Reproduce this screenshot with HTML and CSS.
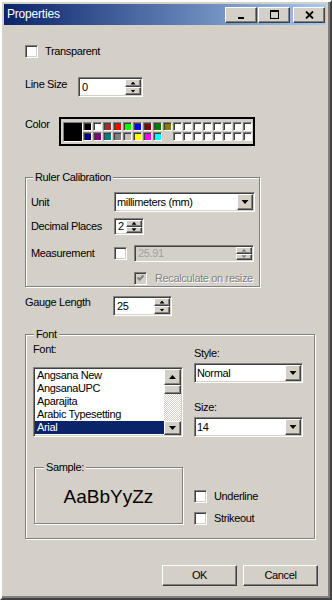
FILE: index.html
```html
<!DOCTYPE html>
<html lang="en">
<head>
    <meta charset="UTF-8">
    <meta name="viewport" content="width=device-width, initial-scale=1.0">
    <title>Properties</title>
    <link rel="stylesheet" href="styles.css">
</head>
<body>
    <div class="window">
        <!-- Title Bar -->
        <div class="titlebar">
            <span class="title">Properties</span>
            <div class="caption-buttons">
                <span class="cap-btn">
                    <svg width="9" height="9" viewBox="0 0 9 9"><rect x="1" y="7" width="6" height="2" fill="#000"/></svg>
                </span>
                <span class="cap-btn">
                    <svg width="9" height="9" viewBox="0 0 9 9"><path d="M0 0h9v9H0z M1 2v6h7V2z" fill="#000" fill-rule="evenodd"/></svg>
                </span>
                <span class="cap-btn close-btn">
                    <svg width="9" height="8" viewBox="0 0 9 8"><path d="M1 0.5l7 7M8 0.5l-7 7" stroke="#000" stroke-width="1.8"/></svg>
                </span>
            </div>
        </div>

        <div class="content">
            <!-- Transparent -->
            <div class="check-row transparent-row">
                <span class="check"></span>
                <span>Transparent</span>
            </div>

            <!-- Line Size -->
            <div class="row line-row">
                <span class="label line-label">Line Size</span>
                <div class="spin spin-line">
                    <span class="spin-value">0</span>
                    <span class="spin-btns">
                        <span class="spin-btn"><i class="tiny-up"></i></span>
                        <span class="spin-btn"><i class="tiny-down"></i></span>
                    </span>
                </div>
            </div>

            <!-- Color -->
            <div class="row color-row">
                <span class="label color-label">Color</span>
                <div class="palette">
                    <span class="swatch-big"></span>
                    <div class="swatch-grid">
                        <span class="swatch" style="background:#000000"></span>
                        <span class="swatch" style="background:#ffffff"></span>
                        <span class="swatch" style="background:#a52a2a"></span>
                        <span class="swatch" style="background:#ff0000"></span>
                        <span class="swatch" style="background:#00ff00"></span>
                        <span class="swatch" style="background:#0000ff"></span>
                        <span class="swatch" style="background:#800000"></span>
                        <span class="swatch" style="background:#008000"></span>
                        <span class="swatch" style="background:#808000"></span>
                        <span class="swatch"></span><span class="swatch"></span><span class="swatch"></span><span class="swatch"></span>
                        <span class="swatch"></span><span class="swatch"></span><span class="swatch"></span><span class="swatch"></span>

                        <span class="swatch" style="background:#000080"></span>
                        <span class="swatch" style="background:#800080"></span>
                        <span class="swatch" style="background:#008080"></span>
                        <span class="swatch" style="background:#808080"></span>
                        <span class="swatch" style="background:#c0c0c0"></span>
                        <span class="swatch" style="background:#ffff00"></span>
                        <span class="swatch" style="background:#ff00ff"></span>
                        <span class="swatch" style="background:#00ffff"></span>
                        <span class="swatch-gap"></span>
                        <span class="swatch"></span><span class="swatch"></span><span class="swatch"></span><span class="swatch"></span>
                        <span class="swatch"></span><span class="swatch"></span><span class="swatch"></span><span class="swatch"></span>
                    </div>
                </div>
            </div>

            <!-- Ruler Calibration -->
            <fieldset class="group ruler-group">
                <legend>Ruler Calibration</legend>
                <div class="ruler-row unit-row">
                    <span class="ruler-label">Unit</span>
                    <div class="select select-unit">
                        <span class="select-value">millimeters (mm)</span>
                        <span class="select-btn"><i class="arrow-down"></i></span>
                    </div>
                </div>
                <div class="ruler-row decimal-row">
                    <span class="ruler-label">Decimal Places</span>
                    <div class="spin spin-decimal">
                        <span class="spin-value">2</span>
                        <span class="spin-btns">
                            <span class="spin-btn"><i class="tiny-up"></i></span>
                            <span class="spin-btn"><i class="tiny-down"></i></span>
                        </span>
                    </div>
                </div>
                <div class="ruler-row measure-row">
                    <span class="ruler-label">Measurement</span>
                    <span class="check"></span>
                    <div class="spin spin-measure disabled">
                        <span class="spin-value">25.91</span>
                        <span class="spin-btns">
                            <span class="spin-btn"><i class="tiny-up"></i></span>
                            <span class="spin-btn"><i class="tiny-down"></i></span>
                        </span>
                    </div>
                </div>
                <div class="check-row recalc-row">
                    <span class="check disabled">
                        <svg width="7" height="7" viewBox="0 0 7 7"><path d="M0.5 2.5l2 2 4-4" stroke="#808080" stroke-width="2" fill="none"/></svg>
                    </span>
                    <span class="disabled-text">Recalculate on resize</span>
                </div>
            </fieldset>

            <!-- Gauge Length -->
            <div class="row gauge-row">
                <span class="label gauge-label">Gauge Length</span>
                <div class="spin spin-gauge">
                    <span class="spin-value">25</span>
                    <span class="spin-btns">
                        <span class="spin-btn"><i class="tiny-up"></i></span>
                        <span class="spin-btn"><i class="tiny-down"></i></span>
                    </span>
                </div>
            </div>

            <!-- Font -->
            <fieldset class="group font-group">
                <legend>Font</legend>
                <div class="font-cols">
                    <div class="font-left">
                        <span class="caption">Font:</span>
                        <div class="listbox">
                            <div class="list-items">
                                <div class="list-item">Angsana New</div>
                                <div class="list-item">AngsanaUPC</div>
                                <div class="list-item">Aparajita</div>
                                <div class="list-item">Arabic Typesetting</div>
                                <div class="list-item selected">Arial</div>
                            </div>
                            <div class="scrollbar">
                                <span class="sb-btn sb-up"><i class="arrow-up"></i></span>
                                <span class="sb-thumb"></span>
                                <span class="sb-track"></span>
                                <span class="sb-btn sb-down"><i class="arrow-down"></i></span>
                            </div>
                        </div>
                        <fieldset class="group sample-group">
                            <legend>Sample:</legend>
                            <div class="sample-text">AaBbYyZz</div>
                        </fieldset>
                    </div>

                    <div class="font-right">
                        <span class="caption">Style:</span>
                        <div class="select select-style">
                            <span class="select-value">Normal</span>
                            <span class="select-btn"><i class="arrow-down"></i></span>
                        </div>
                        <span class="caption size-caption">Size:</span>
                        <div class="select select-size">
                            <span class="select-value">14</span>
                            <span class="select-btn"><i class="arrow-down"></i></span>
                        </div>
                        <div class="check-row underline-row">
                            <span class="check"></span>
                            <span>Underline</span>
                        </div>
                        <div class="check-row strike-row">
                            <span class="check"></span>
                            <span>Strikeout</span>
                        </div>
                    </div>
                </div>
            </fieldset>

            <!-- Dialog Buttons -->
            <div class="footer">
                <span class="push-btn">OK</span>
                <span class="push-btn">Cancel</span>
            </div>
        </div>
    </div>
</body>
</html>
```

FILE: styles.css
```css
/* --- Base --- */
body {
    margin: 0;
    font-family: "Liberation Sans", Arial, sans-serif;
    font-size: 11px;
    line-height: 13px;
    letter-spacing: -0.35px;
    color: #000;
    background: #d4d0c8;
}

/* --- Window Frame --- */
.window {
    width: 332px;
    height: 600px;
    box-sizing: border-box;
    border: 2px solid;
    border-color: #ffffff #404040 #404040 #ffffff;
    box-shadow: inset -2px -2px 0 #808080;
    padding: 2px 4px 4px 2px;
    background: #d4d0c8;
}

/* --- Title Bar --- */
.titlebar {
    height: 21px;
    display: flex;
    align-items: center;
    justify-content: space-between;
    padding: 0 1px 0 3px;
    background: linear-gradient(to right, #0a246a, #a6caf0);
}

.title {
    color: #fff;
    font-size: 12px;
    letter-spacing: -0.2px;
}

.caption-buttons {
    display: flex;
    gap: 1px;
}

.cap-btn {
    width: 32px;
    height: 16px;
    box-sizing: border-box;
    display: flex;
    align-items: center;
    justify-content: center;
    background: #d4d0c8;
    border: 1px solid;
    border-color: #ffffff #404040 #404040 #ffffff;
    box-shadow: inset -1px -1px 0 #808080;
}

.close-btn {
    margin-left: 2px;
}

/* --- Content --- */
.content {
    display: flex;
    flex-direction: column;
    align-items: flex-start;
    padding: 0 8px 0 21px;
}

.row {
    display: flex;
    align-items: flex-start;
}

.label {
    padding-top: 1px;
}

/* --- Checkboxes --- */
.check-row {
    display: flex;
    align-items: center;
    gap: 7px;
    height: 13px;
}

.check {
    width: 13px;
    height: 13px;
    flex: none;
    box-sizing: border-box;
    border: 1px solid;
    border-color: #808080 #ffffff #ffffff #808080;
    box-shadow: inset 1px 1px 0 #404040, inset -1px -1px 0 #d4d0c8;
    background: #fff;
    display: flex;
    align-items: center;
    justify-content: center;
}

.check.disabled {
    background: #d4d0c8;
}

.disabled-text {
    color: #808080;
    text-shadow: 1px 1px 0 #fff;
}

.transparent-row {
    margin-top: 20px;
}

/* --- Spinners --- */
.spin {
    display: flex;
    box-sizing: border-box;
    border: 1px solid;
    border-color: #808080 #ffffff #ffffff #808080;
    box-shadow: inset 1px 1px 0 #404040, inset -1px -1px 0 #d4d0c8;
    background: #fff;
    padding: 1px;
}

.spin-value {
    flex: 1;
    align-self: center;
    padding-left: 2px;
}

.spin-btns {
    width: 16px;
    display: flex;
    flex-direction: column;
}

.spin-btn {
    flex: 1;
    display: flex;
    align-items: center;
    justify-content: center;
    background: #d4d0c8;
    box-sizing: border-box;
    border: 1px solid;
    border-color: #ffffff #404040 #404040 #ffffff;
    box-shadow: inset -1px -1px 0 #808080;
}

.tiny-up,
.tiny-down {
    width: 5px;
    height: 3px;
    background: #000;
}

.tiny-up {
    clip-path: polygon(50% 0, 100% 100%, 0 100%);
}

.tiny-down {
    clip-path: polygon(0 0, 100% 0, 50% 100%);
}

.spin.disabled {
    background: #d4d0c8;
    color: #a0a0a0;
}

.spin.disabled .tiny-up,
.spin.disabled .tiny-down {
    background: #808080;
}

.spin-line {
    width: 65px;
    height: 20px;
}

.spin-decimal {
    width: 30px;
    height: 17px;
}

.spin-measure {
    width: 120px;
    height: 17px;
    margin-left: 7px;
}

.spin-gauge {
    width: 59px;
    height: 20px;
}

.line-row {
    margin-top: 19px;
}

.line-label {
    width: 53px;
}

/* --- Color Palette --- */
.color-row {
    margin-top: 20px;
}

.color-label {
    width: 34px;
}

.palette {
    width: 196px;
    height: 29px;
    box-sizing: border-box;
    border: 2px solid #000;
    padding: 3px 0 0 2px;
    display: flex;
}

.swatch-big {
    width: 20px;
    height: 20px;
    box-sizing: border-box;
    background: #000;
    border: 1px solid;
    border-color: #808080 #ffffff #ffffff #808080;
}

.swatch-grid {
    display: grid;
    grid-template-columns: repeat(17, 9px);
    grid-auto-rows: 9px;
    gap: 1px;
    margin-left: 0;
}

.swatch {
    box-sizing: border-box;
    background: #fff;
    border: 1px solid;
    border-color: #808080 #ffffff #ffffff #808080;
    box-shadow: inset 1px 1px 0 #404040;
}

/* --- Group Boxes --- */
.group {
    margin: 0;
    box-sizing: border-box;
    border: 1px solid #808080;
    box-shadow: inset 1px 1px 0 #fff, 1px 1px 0 #fff;
    min-width: 0;
}

.group legend {
    padding: 0 2px;
    line-height: 13px;
    background: #d4d0c8;
}

.ruler-group {
    width: 235px;
    margin-top: 25px;
    padding: 8px 0 1px 5px;
}

.ruler-group legend {
    margin-left: 2px;
}

.ruler-row {
    display: flex;
    align-items: center;
}

.ruler-label {
    width: 83px;
}

.decimal-row {
    margin-top: 6px;
}

.measure-row {
    margin-top: 10px;
}

.recalc-row {
    margin-top: 10px;
    padding-left: 103px;
    gap: 8px;
}

/* --- Dropdowns --- */
.select {
    display: flex;
    box-sizing: border-box;
    height: 20px;
    border: 1px solid;
    border-color: #808080 #ffffff #ffffff #808080;
    box-shadow: inset 1px 1px 0 #404040, inset -1px -1px 0 #d4d0c8;
    background: #fff;
    padding: 1px;
}

.select-value {
    flex: 1;
    align-self: center;
    padding-left: 1px;
}

.select-btn {
    width: 16px;
    box-sizing: border-box;
    display: flex;
    align-items: center;
    justify-content: center;
    background: #d4d0c8;
    border: 1px solid;
    border-color: #ffffff #404040 #404040 #ffffff;
    box-shadow: inset -1px -1px 0 #808080;
}

.arrow-down,
.arrow-up {
    width: 7px;
    height: 4px;
    background: #000;
}

.arrow-down {
    clip-path: polygon(0 0, 100% 0, 50% 100%);
}

.arrow-up {
    clip-path: polygon(50% 0, 100% 100%, 0 100%);
}

.select-unit {
    width: 141px;
}

.select-style,
.select-size {
    width: 109px;
    margin-top: 3px;
}

/* --- Gauge Length --- */
.gauge-row {
    margin-top: 9px;
}

.gauge-label {
    width: 88px;
    padding-top: 0;
}

/* --- Font Group --- */
.font-group {
    width: 290px;
    margin-top: 12px;
    padding: 2px 0 13px 7px;
}

.font-group legend {
    margin-left: 1px;
}

.font-cols {
    display: flex;
    gap: 11px;
}

.font-left {
    width: 150px;
    display: flex;
    flex-direction: column;
}

.font-right {
    width: 109px;
    padding-top: 4px;
    display: flex;
    flex-direction: column;
}

.size-caption {
    margin-top: 18px;
}

.listbox {
    margin-top: 11px;
    width: 150px;
    height: 70px;
    box-sizing: border-box;
    display: flex;
    border: 1px solid;
    border-color: #808080 #ffffff #ffffff #808080;
    box-shadow: inset 1px 1px 0 #404040, inset -1px -1px 0 #d4d0c8;
    background: #fff;
    padding: 1px;
}

.list-items {
    flex: 1;
}

.list-item {
    height: 13px;
    padding-left: 2px;
    white-space: nowrap;
}

.list-item.selected {
    background: #0a246a;
    color: #fff;
}

.scrollbar {
    width: 17px;
    display: flex;
    flex-direction: column;
    background: conic-gradient(#ffffff 25%, #d4d0c8 0 50%, #ffffff 0 75%, #d4d0c8 0) 0 0 / 2px 2px;
}

.sb-btn,
.sb-thumb {
    box-sizing: border-box;
    display: flex;
    align-items: center;
    justify-content: center;
    background: #d4d0c8;
    border: 1px solid;
    border-color: #ffffff #404040 #404040 #ffffff;
    box-shadow: inset -1px -1px 0 #808080;
}

.sb-up {
    height: 16px;
}

.sb-thumb {
    height: 9px;
}

.sb-track {
    flex: 1;
}

.sb-down {
    height: 14px;
}

/* --- Sample --- */
.sample-group {
    width: 149px;
    margin-top: 24px;
    margin-left: 1px;
    padding: 12px 0 15px 0;
}

.sample-group legend {
    margin-left: 9px;
}

.sample-text {
    font-size: 19px;
    line-height: 22px;
    letter-spacing: 0;
    text-align: center;
}

.underline-row {
    margin-top: 53px;
}

.strike-row {
    margin-top: 9px;
}

/* --- Dialog Buttons --- */
.footer {
    align-self: stretch;
    display: flex;
    justify-content: flex-end;
    gap: 6px;
    margin-top: 26px;
}

.push-btn {
    width: 75px;
    height: 21px;
    box-sizing: border-box;
    display: flex;
    align-items: center;
    justify-content: center;
    background: #d4d0c8;
    border: 1px solid;
    border-color: #ffffff #404040 #404040 #ffffff;
    box-shadow: inset -1px -1px 0 #808080;
}
```
